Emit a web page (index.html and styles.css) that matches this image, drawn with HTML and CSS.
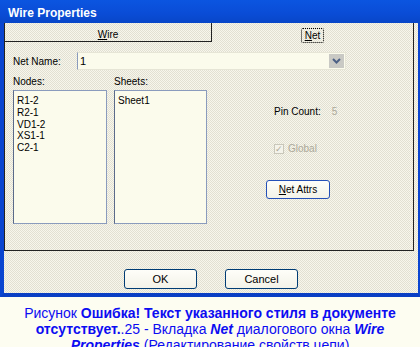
FILE: index.html
```html
<!DOCTYPE html>
<html lang="ru">

<head>
    <meta charset="UTF-8">
    <title>Wire Properties</title>
    <link rel="stylesheet" href="styles.css">
</head>

<body>
    <!-- Dialog -->
    <div class="dialog">
        <div class="titlebar">Wire Properties</div>
        <div class="frame">
            <div class="tabs">
                <div class="tab tab-off"><span><u>W</u>ire</span></div>
                <div class="tab tab-on"><span class="focus"><u>N</u>et</span></div>
            </div>

            <div class="page">
                <div class="name-row">
                    <span class="name-label">Net Name:</span>
                    <div class="combo">
                        <span class="combo-value">1</span>
                        <span class="drop">
                            <svg width="9" height="6" viewBox="0 0 9 6">
                                <path d="M1 1 L4.5 4.5 L8 1" fill="none" stroke="#4d6185" stroke-width="2"/>
                            </svg>
                        </span>
                    </div>
                </div>

                <div class="lists">
                    <div class="col">
                        <div class="cap">Nodes:</div>
                        <ul class="listbox nodes">
                            <li>R1-2</li>
                            <li>R2-1</li>
                            <li>VD1-2</li>
                            <li>XS1-1</li>
                            <li>C2-1</li>
                        </ul>
                    </div>
                    <div class="col">
                        <div class="cap">Sheets:</div>
                        <ul class="listbox sheets">
                            <li>Sheet1</li>
                        </ul>
                    </div>
                    <div class="side">
                        <div class="pin"><span>Pin Count:</span><span class="pin-num">5</span></div>
                        <div class="check"><span class="box">&#10003;</span>Global</div>
                        <button class="btn attrs"><u>N</u>et Attrs</button>
                    </div>
                </div>
            </div>

            <div class="buttons">
                <button class="btn">OK</button>
                <button class="btn">Cancel</button>
            </div>
        </div>
    </div>

    <!-- Caption -->
    <p class="caption">
        Рисунок <b>Ошибка! Текст указанного стиля в документе отсутствует.</b>.25 - Вкладка <b><i>Net</i></b> диалогового окна <b><i>Wire Properties</i></b> (Редактирование свойств цепи)
    </p>
</body>

</html>
```

FILE: styles.css
```css
/* Base */
body {
    margin: 0;
    width: 420px;
    height: 347px;
    overflow: hidden;
    background: #fdfdf1;
    font-family: "Liberation Sans", Arial, sans-serif;
}

/* Dialog window */
.dialog {
    width: 420px;
}

.titlebar {
    height: 23px;
    line-height: 26px;
    padding-left: 8px;
    background: linear-gradient(#0b55e0, #0a4cd6 60%, #0846c8);
    color: white;
    font-weight: bold;
    font-size: 12px;
    box-sizing: border-box;
}

.frame {
    height: 274px;
    box-sizing: border-box;
    border-left: 4px solid #0a45d0;
    border-right: 2px solid #0a45d0;
    border-bottom: 4px solid #0a3fc4;
    background: repeating-conic-gradient(#e2e0d2 0 25%, #f7f6ec 0 50%) 0 0 / 2px 2px;
    font-size: 10px;
    color: #000;
}

/* Tabs */
.tabs {
    display: flex;
    width: 410px;
    height: 19px;
}

.tab {
    box-sizing: border-box;
    display: flex;
    justify-content: center;
    align-items: center;
    padding-top: 5px;
}

.tab-off {
    width: 208px;
    border-left: 1px solid #222;
    border-right: 1px solid #222;
    border-bottom: 1px solid #222;
}

.tab-on {
    flex: 1;
    border-right: 1px solid #222;
}

.focus {
    border: 1px dotted #000;
    border-radius: 2px;
    padding: 1px 3px;
    line-height: 11px;
}

/* Tab page */
.page {
    width: 410px;
    height: 209px;
    box-sizing: border-box;
    border-left: 1px solid #222;
    border-right: 1px solid #222;
    border-bottom: 1px solid #222;
    padding: 10px 0 0 8px;
}

.name-row {
    display: flex;
    align-items: center;
}

.name-label {
    width: 64px;
    padding-top: 1px;
}

.combo {
    width: 269px;
    height: 18px;
    box-sizing: border-box;
    display: flex;
    align-items: center;
    justify-content: space-between;
    background: #fbfbec;
    border: 1px solid #e6e5d6;
    border-left: 1px solid #8a9bbd;
    padding: 0 1px 0 2px;
    font-size: 11px;
}

.drop {
    width: 15px;
    height: 14px;
    display: flex;
    align-items: center;
    justify-content: center;
    background: #c9c9c4;
}

.lists {
    display: flex;
    gap: 7px;
    margin-top: 6px;
}

.cap {
    line-height: 12px;
    margin-bottom: 2px;
}

.listbox {
    list-style: none;
    margin: 0;
    padding: 4px 0 0 3px;
    height: 134px;
    box-sizing: border-box;
    background: #fbfbec;
    border: 1px solid #8a9bbd;
    border-left-color: #5a6a8a;
    line-height: 11.8px;
}

.nodes {
    width: 94px;
}

.sheets {
    width: 93px;
}

/* Right side */
.side {
    display: flex;
    flex-direction: column;
    align-items: flex-start;
    padding: 30px 0 0 60px;
}

.pin {
    display: flex;
    gap: 11px;
    line-height: 12px;
}

.pin-num {
    color: #aca899;
}

.check {
    display: flex;
    align-items: center;
    gap: 4px;
    margin-top: 25px;
    color: #aca899;
    line-height: 12px;
}

.box {
    width: 10px;
    height: 10px;
    box-sizing: border-box;
    border: 1px solid #c9c7ba;
    background: #f4f3ea;
    font-size: 9px;
    line-height: 8px;
    text-align: center;
    color: #aca899;
}

/* Buttons */
.btn {
    width: 73px;
    height: 20px;
    padding: 0;
    border: 1px solid #003c74;
    border-radius: 3px;
    background: linear-gradient(#fefef9, #f3f2e8);
    font-family: "Liberation Sans", Arial, sans-serif;
    font-size: 11px;
    color: #000;
}

.attrs {
    width: 64px;
    height: 19px;
    margin: 25px 0 0 -8px;
    font-size: 10px;
    border-color: #2450b8;
}

.buttons {
    display: flex;
    justify-content: center;
    gap: 28px;
    padding-top: 18px;
}

/* Caption */
.caption {
    margin: 8px 0 0;
    padding: 0 12px;
    text-align: center;
    color: #0c0cf2;
    font-size: 14px;
    line-height: 16px;
}
```
